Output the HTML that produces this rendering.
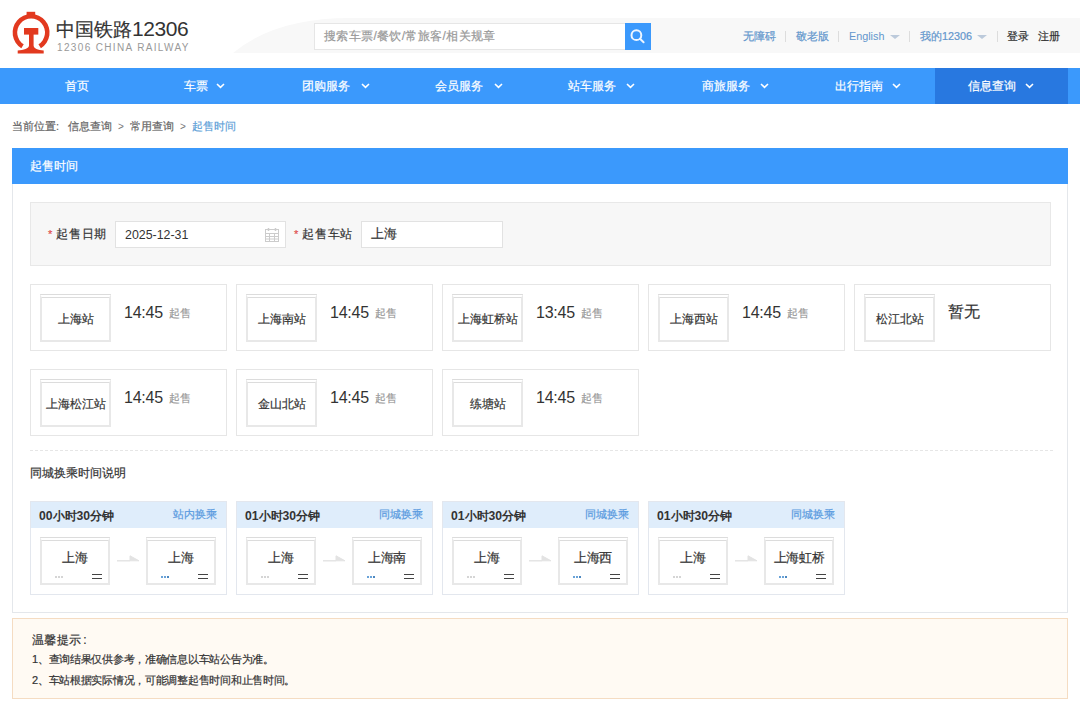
<!DOCTYPE html>
<html><head><meta charset="utf-8">
<style>
*{margin:0;padding:0;box-sizing:border-box;}
html,body{width:1080px;height:712px;overflow:hidden;background:#fff;font-family:"Liberation Sans",sans-serif;color:#333;-webkit-text-stroke:0.2px;}
.ns{-webkit-text-stroke:0 !important;}
.abs{position:absolute;}
.t{position:absolute;white-space:nowrap;line-height:1;}
/* header */
#band{position:absolute;left:0;top:0;width:1080px;height:68px;}
.nav{position:absolute;left:0;top:68px;width:1080px;height:36px;background:#3b99fc;}
.nav .act{position:absolute;left:935px;top:0;width:133px;height:36px;background:#2878e0;}
.nav .t{color:#fff;font-size:12px;top:12px;}
.chv{position:absolute;top:15px;width:9px;height:6px;}
.chev{position:absolute;width:6px;height:6px;border-right:1.6px solid #fff;border-bottom:1.6px solid #fff;transform:rotate(45deg);}
.links .t{font-size:10.8px;color:#6296cc;top:31px;}
.sep{position:absolute;top:31px;width:1px;height:11px;background:#ddd;}
.tri{position:absolute;top:35px;width:0;height:0;border-left:5px solid transparent;border-right:5px solid transparent;border-top:4px solid #bccadb;}
/* panel */
.panel{position:absolute;left:12px;top:148px;width:1056px;height:465px;border:1px solid #e4e7eb;border-top:none;}
.ptitle{position:absolute;left:12px;top:148px;width:1056px;height:36px;background:#3b99fc;}
.formbox{position:absolute;left:30px;top:202px;width:1021px;height:64px;background:#f7f7f7;border:1px solid #e8e8e8;}
.inp{position:absolute;background:#fff;border:1px solid #e2e2e2;}
.card{position:absolute;width:197px;height:67px;border:1px solid #e6e6e6;background:#fff;}
.sbox{position:absolute;left:9px;top:9px;width:71px;height:48px;border:2px solid #e8e8e8;border-top:4px double #dcdcdc;background:#fff;}
.sbox span{position:absolute;left:0;right:0;top:15px;text-align:center;font-size:12px;color:#333;line-height:1;white-space:nowrap;}
.time{position:absolute;left:93px;top:20px;font-size:16px;letter-spacing:-0.25px;color:#333;line-height:1;}
.qs{position:absolute;left:138px;top:23px;font-size:10.8px;color:#999;line-height:1;}
.tcard{position:absolute;top:501px;width:197px;height:94px;border:1px solid #e3e7ee;background:#fff;}
.thead{position:absolute;left:0;top:0;width:195px;height:26px;background:#dfedfb;}
.thead b{-webkit-text-stroke:0;position:absolute;left:8px;top:8px;font-size:12.2px;color:#333;line-height:1;white-space:nowrap;}
.thead i{position:absolute;right:9px;top:7px;font-style:normal;font-size:10.8px;color:#5a9be0;line-height:1;white-space:nowrap;}
.mbox{position:absolute;top:35px;width:70px;height:47.5px;border:2px solid #e8e8e8;border-top:4px double #dcdcdc;background:#fff;}
.mbox span{position:absolute;left:0;right:0;top:10px;text-align:center;font-size:13px;letter-spacing:-0.3px;color:#333;line-height:1;white-space:nowrap;}
.mbox .eq{position:absolute;right:6px;top:33px;width:10px;height:4.5px;border-top:1.2px solid #444;border-bottom:1.2px solid #444;}
.mbox .sm{position:absolute;left:13px;top:35px;width:2px;height:2px;background:#d5d5d5;box-shadow:3px 0 0 #d5d5d5,6px 0 0 #d5d5d5;}
.mbox .sm.b{background:#6aa3d8;box-shadow:3px 0 0 #6aa3d8,6px 0 0 #4d88c0;}
.arrow{position:absolute;top:52px;width:23px;height:8px;}
.warn{position:absolute;left:12px;top:618px;width:1056px;height:81px;background:#fffaf3;border:1px solid #f5dcc2;}
.warn .t{font-size:11px;letter-spacing:-0.28px;color:#333;}
</style></head><body>

<!-- header band swoosh -->
<svg class="abs" style="left:0;top:0" width="1080" height="68">
  <path d="M233 53 Q 275 18, 350 18 L1080 18 L1080 53 Z" fill="#f8f8f8"/>
</svg>

<!-- logo -->
<svg class="abs" style="left:0;top:0" width="60" height="60" viewBox="0 0 60 60">
  <g fill="#e2391f">
    <rect x="26.6" y="11.8" width="8.6" height="3.2"/>
    <path d="M21.3 48.19 A 18.5 18.5 0 1 1 40.9 48.19 L 38.47 44.29 A 13.9 13.9 0 1 0 23.73 44.29 Z"/>
    <rect x="24" y="28" width="14.3" height="6.6"/>
    <path d="M29 34 H33.6 V45.5 C 33.6 48.5, 38 50, 43.7 50.6 V 53.6 H 17.7 V 50.6 C 23.5 50, 29 48.5, 29 45.5 Z"/>
  </g>
</svg>
<div class="t" style="left:56px;top:18px;font-size:19px;color:#333;">中国铁路<span class="ns" style="font-size:21px;letter-spacing:-0.45px">12306</span></div>
<div class="t ns" style="left:57px;top:43px;font-size:10px;color:#999;letter-spacing:1.35px;">12306 CHINA RAILWAY</div>

<!-- search -->
<div class="inp" style="left:314px;top:23px;width:312px;height:27px;border-color:#e6e6e6;"></div>
<div class="t" style="left:324px;top:30px;font-size:12px;letter-spacing:0.35px;color:#999;">搜索车票/餐饮/常旅客/相关规章</div>
<div class="abs" style="left:625px;top:23px;width:26px;height:27px;background:#3b99fc;"></div>
<svg class="abs" style="left:625px;top:23px" width="26" height="27">
  <circle cx="11.4" cy="12.2" r="4.9" fill="none" stroke="#eef6ff" stroke-width="2"/>
  <path d="M15 15.8 L18.6 19.2" stroke="#eef6ff" stroke-width="2" stroke-linecap="round"/>
</svg>

<!-- right links -->
<div class="links">
  <div class="t" style="left:743px;">无障碍</div>
  <div class="sep" style="left:785px;"></div>
  <div class="t" style="left:796px;">敬老版</div>
  <div class="sep" style="left:838px;"></div>
  <div class="t ns" style="left:849px;">English</div>
  <div class="tri" style="left:890px;"></div>
  <div class="sep" style="left:909px;"></div>
  <div class="t" style="left:920px;">我的12306</div>
  <div class="tri" style="left:977px;"></div>
  <div class="sep" style="left:997px;"></div>
  <div class="t" style="left:1007px;color:#333;">登录</div>
  <div class="t" style="left:1038px;color:#333;">注册</div>
</div>

<!-- nav -->
<div class="nav">
  <div class="act"></div>
  <div class="t" style="left:65px;">首页</div>
  <div class="t" style="left:184px;">车票</div><svg class="chv" style="left:216px" width="9" height="6"><path d="M1 1 L4.5 4.3 L8 1" fill="none" stroke="#fff" stroke-width="1.6"/></svg>
  <div class="t" style="left:302px;">团购服务</div><svg class="chv" style="left:361px" width="9" height="6"><path d="M1 1 L4.5 4.3 L8 1" fill="none" stroke="#fff" stroke-width="1.6"/></svg>
  <div class="t" style="left:435px;">会员服务</div><svg class="chv" style="left:494px" width="9" height="6"><path d="M1 1 L4.5 4.3 L8 1" fill="none" stroke="#fff" stroke-width="1.6"/></svg>
  <div class="t" style="left:568px;">站车服务</div><svg class="chv" style="left:626px" width="9" height="6"><path d="M1 1 L4.5 4.3 L8 1" fill="none" stroke="#fff" stroke-width="1.6"/></svg>
  <div class="t" style="left:702px;">商旅服务</div><svg class="chv" style="left:760px" width="9" height="6"><path d="M1 1 L4.5 4.3 L8 1" fill="none" stroke="#fff" stroke-width="1.6"/></svg>
  <div class="t" style="left:835px;">出行指南</div><svg class="chv" style="left:892px" width="9" height="6"><path d="M1 1 L4.5 4.3 L8 1" fill="none" stroke="#fff" stroke-width="1.6"/></svg>
  <div class="t" style="left:968px;">信息查询</div><svg class="chv" style="left:1025px" width="9" height="6"><path d="M1 1 L4.5 4.3 L8 1" fill="none" stroke="#fff" stroke-width="1.6"/></svg>
</div>

<!-- breadcrumb -->
<div class="t" style="left:12px;top:121px;font-size:10.8px;color:#666;">当前位置<span style="font-family:'Liberation Sans'">:</span></div>
<div class="t" style="left:68px;top:121px;font-size:10.8px;color:#666;">信息查询</div>
<div class="t ns" style="left:118px;top:122px;font-size:10px;color:#777;">&gt;</div>
<div class="t" style="left:130px;top:121px;font-size:10.8px;color:#666;">常用查询</div>
<div class="t ns" style="left:180px;top:122px;font-size:10px;color:#777;">&gt;</div>
<div class="t" style="left:192px;top:121px;font-size:10.8px;color:#5e9fd8;">起售时间</div>

<!-- panel -->
<div class="panel"></div>
<div class="ptitle"></div>
<div class="t" style="left:30px;top:160px;font-size:12.3px;color:#fff;">起售时间</div>

<div class="formbox"></div>
<div class="t" style="left:48px;top:229px;font-size:11px;color:#e05050;">*</div>
<div class="t" style="left:56px;top:228px;font-size:12px;letter-spacing:0.8px;color:#333;">起售日期</div>
<div class="inp" style="left:115px;top:221px;width:171px;height:27px;"></div>
<div class="t ns" style="left:125px;top:229px;font-size:12.4px;color:#333;">2025-12-31</div>
<svg class="abs" style="left:264px;top:227px" width="16" height="16" viewBox="0 0 16 16">
  <g fill="none" stroke="#ccc" stroke-width="1">
    <rect x="1.5" y="2.5" width="13" height="12"/>
    <path d="M1.5 6.5 H14.5 M1.5 9.5 H14.5 M1.5 12 H14.5 M5.5 6.5 V14.5 M10.5 6.5 V14.5"/>
    <path d="M4.5 1 V4 M11.5 1 V4" stroke-width="1.5"/>
  </g>
</svg>
<div class="t" style="left:294px;top:229px;font-size:11px;color:#e05050;">*</div>
<div class="t" style="left:302px;top:228px;font-size:12px;letter-spacing:0.8px;color:#333;">起售车站</div>
<div class="inp" style="left:361px;top:221px;width:142px;height:27px;"></div>
<div class="t" style="left:371px;top:228px;font-size:12.6px;color:#333;">上海</div>

<!-- station cards row 1 -->
<div class="card" style="left:30px;top:284px;"><div class="sbox"><span>上海站</span></div><div class="time ns">14:45</div><div class="qs">起售</div></div>
<div class="card" style="left:236px;top:284px;"><div class="sbox"><span>上海南站</span></div><div class="time ns">14:45</div><div class="qs">起售</div></div>
<div class="card" style="left:442px;top:284px;"><div class="sbox"><span>上海虹桥站</span></div><div class="time ns">13:45</div><div class="qs">起售</div></div>
<div class="card" style="left:648px;top:284px;"><div class="sbox"><span>上海西站</span></div><div class="time ns">14:45</div><div class="qs">起售</div></div>
<div class="card" style="left:854px;top:284px;"><div class="sbox"><span>松江北站</span></div><div class="time" style="left:93px;top:19px;font-size:16px;">暂无</div></div>
<!-- row 2 -->
<div class="card" style="left:30px;top:369px;"><div class="sbox"><span>上海松江站</span></div><div class="time ns">14:45</div><div class="qs">起售</div></div>
<div class="card" style="left:236px;top:369px;"><div class="sbox"><span>金山北站</span></div><div class="time ns">14:45</div><div class="qs">起售</div></div>
<div class="card" style="left:442px;top:369px;"><div class="sbox"><span>练塘站</span></div><div class="time ns">14:45</div><div class="qs">起售</div></div>

<div class="abs" style="left:30px;top:450px;width:1025px;height:1px;background:repeating-linear-gradient(90deg,#e6e6e6 0 3px,transparent 3px 5px);"></div>
<div class="t" style="left:30px;top:467px;font-size:12.3px;color:#333;">同城换乘时间说明</div>

<!-- transfer cards -->
<div class="tcard" style="left:30px;">
  <div class="thead"><b>00小时30分钟</b><i>站内换乘</i></div>
  <div class="mbox" style="left:9px;"><span>上海</span><div class="sm"></div><div class="eq"></div></div>
  <svg class="arrow" style="left:86px;" width="22" height="8"><path d="M0 6.8 H22 L13 1.8 V6.8 Z" fill="#e3e3e3" stroke="#e3e3e3" stroke-width="1" stroke-linejoin="round"/></svg>
  <div class="mbox" style="left:115px;"><span>上海</span><div class="sm b"></div><div class="eq"></div></div>
</div>
<div class="tcard" style="left:236px;">
  <div class="thead"><b>01小时30分钟</b><i>同城换乘</i></div>
  <div class="mbox" style="left:9px;"><span>上海</span><div class="sm"></div><div class="eq"></div></div>
  <svg class="arrow" style="left:86px;" width="22" height="8"><path d="M0 6.8 H22 L13 1.8 V6.8 Z" fill="#e3e3e3" stroke="#e3e3e3" stroke-width="1" stroke-linejoin="round"/></svg>
  <div class="mbox" style="left:115px;"><span>上海南</span><div class="sm b"></div><div class="eq"></div></div>
</div>
<div class="tcard" style="left:442px;">
  <div class="thead"><b>01小时30分钟</b><i>同城换乘</i></div>
  <div class="mbox" style="left:9px;"><span>上海</span><div class="sm"></div><div class="eq"></div></div>
  <svg class="arrow" style="left:86px;" width="22" height="8"><path d="M0 6.8 H22 L13 1.8 V6.8 Z" fill="#e3e3e3" stroke="#e3e3e3" stroke-width="1" stroke-linejoin="round"/></svg>
  <div class="mbox" style="left:115px;"><span>上海西</span><div class="sm b"></div><div class="eq"></div></div>
</div>
<div class="tcard" style="left:648px;">
  <div class="thead"><b>01小时30分钟</b><i>同城换乘</i></div>
  <div class="mbox" style="left:9px;"><span>上海</span><div class="sm"></div><div class="eq"></div></div>
  <svg class="arrow" style="left:86px;" width="22" height="8"><path d="M0 6.8 H22 L13 1.8 V6.8 Z" fill="#e3e3e3" stroke="#e3e3e3" stroke-width="1" stroke-linejoin="round"/></svg>
  <div class="mbox" style="left:115px;"><span>上海虹桥</span><div class="sm b"></div><div class="eq"></div></div>
</div>

<!-- warning -->
<div class="warn">
  <div class="t" style="left:19px;top:15px;font-size:12px;letter-spacing:0.3px;">温馨提示<span style="font-family:'Liberation Sans';margin-left:2px">:</span></div>
  <div class="t" style="left:19px;top:35px;">1、查询结果仅供参考，准确信息以车站公告为准。</div>
  <div class="t" style="left:19px;top:56px;">2、车站根据实际情况，可能调整起售时间和止售时间。</div>
</div>

</body></html>
